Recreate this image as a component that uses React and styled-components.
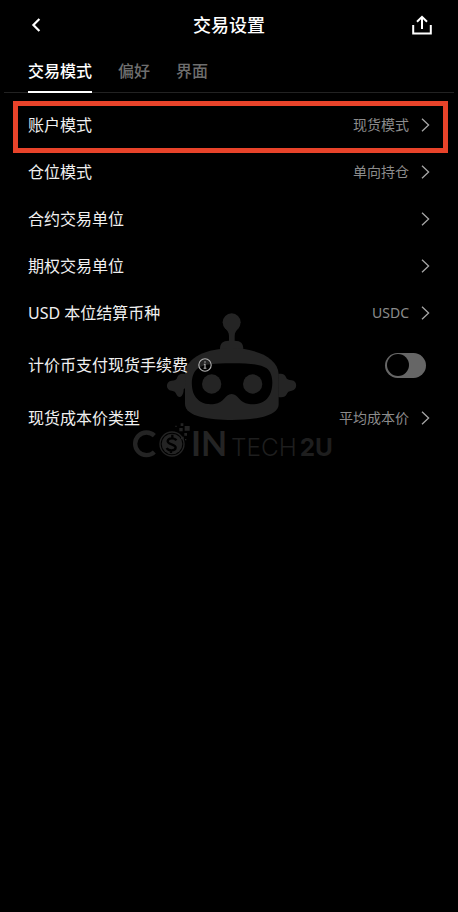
import React, { useState } from "react";
import styled, { createGlobalStyle } from "styled-components";

const tabs = ["交易模式", "偏好", "界面"];

const settings = [
  { id: "account", label: "账户模式", value: "现货模式", marked: true },
  { id: "position", label: "仓位模式", value: "单向持仓" },
  { id: "futures-unit", label: "合约交易单位" },
  { id: "options-unit", label: "期权交易单位" },
  { id: "usd-settle", label: "USD 本位结算币种", value: "USDC" },
  { id: "quote-fee", label: "计价币支付现货手续费", type: "switch" },
  { id: "cost-type", label: "现货成本价类型", value: "平均成本价" },
];

function Chevron() {
  return (
    <svg width="9" height="14" viewBox="0 0 9 14" fill="none" aria-hidden="true">
      <path d="M1 0.8L7.6 7L1 13.2" stroke="#a6a6a6" strokeWidth="1.3" />
    </svg>
  );
}

function RobotLogo() {
  return (
    <svg width="210" height="155" viewBox="12 30 630 465" fill="#242424" aria-hidden="true">
      {/* antenna */}
      <circle cx="335" cy="67" r="27" />
      <path d="M313 82C322 92 327 98 327 108V122C308 122 300 130 300 148H370C370 130 362 122 344 122V108C344 98 349 92 358 82Z" />
      {/* head and ears */}
      <path d="M195 222C197 172 262 145 335 145S473 172 476 222V312C476 350 400 360 335 360S195 350 195 312Z" />
      <path d="M195 222C184 219 175 222 172 232C170 240 163 242 155 242C136 243 136 271 155 272C163 273 167 276 169 283C172 291 180 293 185 288C189 283 191 276 191 268L198 262Z" />
      <path d="M475 222C487 219 495 223 498 232C500 239 507 241 515 241C533 242 533 271 515 272C507 273 502 276 500 283C497 290 488 294 475 291Z" />
      <path
        fill="#000"
        d="M335 190c52 0 86 2 105 15c22 16 20 59 9 80c-12 22-35 30-62 27c-30-3-31-30-52-30s-22 27-52 30c-27 3-48-5-60-27c-11-21-12-64 11-80c19-13 49-15 101-15Z"
      />
      <circle cx="275" cy="252" r="29" />
      <circle cx="398" cy="252" r="29" />
      {/* coin breaking into pixels */}
      <path d="M103 407A34 34 0 1 0 103 456" fill="none" stroke="#242424" strokeWidth="13" />
      <circle cx="156" cy="432" r="36" fill="none" stroke="#242424" strokeWidth="4" />
      <circle cx="156" cy="432" r="31" />
      <g fill="none" stroke="#000" strokeWidth="7">
        <path d="M169 421c-4-7-24-9-26 2s25 9 24 20s-22 11-27 1M157 404v11M153 448v11" />
      </g>
      <path d="M194 378h15v14h-15zM182 370h8v8h-8zM178 384h10v10h-10zM166 377h4v4h-4zM193 399h8v8h-8zM183 410h8v8h-8zM195 417h4v4h-4z" />
      <text x="213" y="468" fontSize="102" fontWeight="700" fontFamily="Lato, sans-serif">IN</text>
      <g fontSize="73" fontFamily="Inter, sans-serif" fill="#1e1e1e">
        <text x="333" y="468" fontWeight="300">TECH</text>
        <text x="539" y="468" fontWeight="700">2U</text>
      </g>
    </svg>
  );
}

export default function App() {
  const [activeTab, setActiveTab] = useState(tabs[0]);
  const [payWithQuote, setPayWithQuote] = useState(false);

  return (
    <>
      <GlobalStyle />
      <Header>
        <IconButton aria-label="返回">
          <svg width="16" height="16" viewBox="0 0 16 16" fill="none">
            <path d="M11.4 2L5.4 8L11.4 14" stroke="#fff" strokeWidth="2.2" />
          </svg>
        </IconButton>
        <h1>交易设置</h1>
        <IconButton aria-label="分享">
          <svg width="20" height="20" viewBox="0 0 20 20" fill="none" stroke="#fff" strokeWidth="2">
            <path d="M1.2 10v8.4h17.6V10M10 14V1.8M5 6.8L10 1.8L15 6.8" />
          </svg>
        </IconButton>
      </Header>

      <Tabs role="tablist">
        {tabs.map((tab) => (
          <Tab key={tab} role="tab" aria-selected={tab === activeTab} $active={tab === activeTab} onClick={() => setActiveTab(tab)}>
            {tab}
          </Tab>
        ))}
      </Tabs>

      <Panel>
        <Watermark>
          <RobotLogo />
        </Watermark>
        {settings.map((item) =>
          item.type === "switch" ? (
            <SwitchRow key={item.id}>
              <div className="name">
                <label htmlFor={item.id}>{item.label}</label>
                <InfoButton aria-label="说明">
                  <svg width="14" height="14" viewBox="0 0 14 14" fill="none" stroke="#b4b4b4" strokeWidth="1.1">
                    <circle cx="7" cy="7" r="6.2" />
                    <path d="M7 3.2v1.6M5.8 6.3H7v4M5.6 10.3h2.8" />
                  </svg>
                </InfoButton>
              </div>
              <Switch id={item.id} type="checkbox" role="switch" checked={payWithQuote} onChange={(e) => setPayWithQuote(e.target.checked)} />
            </SwitchRow>
          ) : (
            <Row key={item.id} $marked={item.marked}>
              <span>{item.label}</span>
              <span className="value">
                {item.value}
                <Chevron />
              </span>
            </Row>
          )
        )}
      </Panel>
    </>
  );
}

const GlobalStyle = createGlobalStyle`
  * {
    box-sizing: border-box;
  }

  body {
    margin: 0;
    min-height: 100vh;
    background: #000;
    color: #f0f0f0;
    font-family: "Noto Sans", "Noto Sans CJK SC", sans-serif;
    font-size: 16px;
    line-height: 24px;
  }

  button {
    padding: 0;
    border: none;
    background: none;
    color: inherit;
    font: inherit;
    cursor: pointer;
  }

  svg {
    display: block;
  }
`;

const Header = styled.header`
  display: flex;
  align-items: center;
  justify-content: space-between;
  height: 50px;
  padding: 0 26px;

  h1 {
    margin: 0;
    font-size: 18px;
    font-weight: 500;
    color: #fff;
  }
`;

const IconButton = styled.button`
  display: flex;
  align-items: center;
  justify-content: center;
  width: 20px;
  height: 24px;
`;

const Tabs = styled.nav`
  display: flex;
  gap: 26px;
  height: 43px;
  margin: 0 4px;
  padding: 0 24px;
  border-bottom: 1px solid #222;
`;

const Tab = styled.button`
  height: 43px;
  border-bottom: 2px solid ${({ $active }) => ($active ? "#fff" : "transparent")};
  color: ${({ $active }) => ($active ? "#fff" : "#6e6e6e")};
  font-weight: 500;
`;

const Panel = styled.main`
  position: relative;
  isolation: isolate;
  padding: 8px 0 40px;
`;

const Watermark = styled.div`
  position: absolute;
  z-index: -1;
  top: 217px;
  left: 0;
  right: 0;
  display: flex;
  justify-content: center;
`;

const Row = styled.button`
  position: relative;
  display: flex;
  align-items: center;
  justify-content: space-between;
  width: 100%;
  height: 47px;
  padding: 0 28px;
  text-align: left;

  .value {
    display: flex;
    align-items: center;
    gap: 12px;
    font-size: 14px;
    color: #8c8c8c;
  }

  /* red frame lies over the row and its gap to the next one */
  &::after {
    content: "";
    display: ${({ $marked }) => ($marked ? "block" : "none")};
    position: absolute;
    inset: 0 10px -5px 13px;
    border: 5px solid #e8432a;
    pointer-events: none;
  }
`;

const SwitchRow = styled.div`
  display: flex;
  align-items: center;
  justify-content: space-between;
  height: 58px;
  padding: 0 32px 0 28px;

  .name {
    display: flex;
    align-items: center;
    gap: 10px;
  }
`;

const InfoButton = styled.button`
  display: flex;
`;

const Switch = styled.input`
  appearance: none;
  display: flex;
  align-items: center;
  width: 41px;
  height: 25px;
  margin: 0;
  padding: 0 2px;
  border-radius: 13px;
  background: #666;
  cursor: pointer;

  &::before {
    content: "";
    width: 22px;
    height: 22px;
    border-radius: 50%;
    background: #000;
  }

  &:checked {
    justify-content: flex-end;
    background: #fff;
  }
`;
